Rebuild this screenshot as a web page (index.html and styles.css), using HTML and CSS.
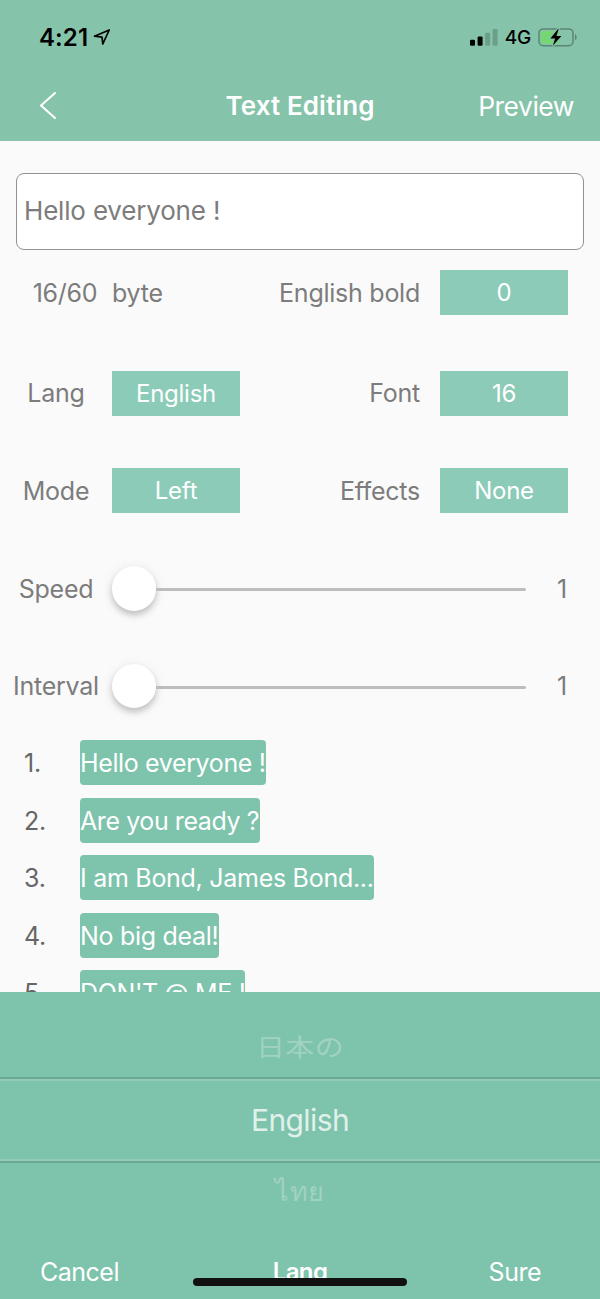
FILE: index.html
```html
<!DOCTYPE html>
<html lang="en">
<head>
<meta charset="utf-8">
<title>Text Editing</title>
<link rel="stylesheet" href="styles.css">
</head>
<body>
<div class="screen">
  <header class="header">
    <div class="status">
      <div class="status-time"><span class="time">4:21</span>
        <svg class="loc" width="18" height="18" viewBox="0 0 18 18"><path d="M1.5 7.2 L16.2 1 L9.8 15 L9 8.2 Z" fill="none" stroke="#000" stroke-width="1.7" stroke-linejoin="round"/></svg>
      </div>
      <div class="status-icons">
        <svg width="28" height="18" viewBox="0 0 28 18"><rect x="0" y="10.7" width="5" height="6" rx="1.2"/><rect x="7.6" y="7.5" width="5" height="9.2" rx="1.2"/><rect x="15.1" y="3.7" width="5" height="13" rx="1.2" fill="#6c9f89"/><rect x="22.6" y="0" width="5" height="16.7" rx="1.2" fill="#6c9f89"/></svg>
        <span class="net">4G</span>
        <svg width="40" height="20" viewBox="0 0 40 20"><rect x="1" y="0.9" width="34" height="16.8" rx="4.2" fill="none" stroke="#5b8675" stroke-width="1.5"/><path d="M37 5.8 Q40.4 9.2 37 12.6 Z" fill="#5b8675"/><rect x="3" y="2.9" width="18.5" height="12.8" rx="2.2" fill="#76d672"/><path d="M20.2 0.8 L12.4 10.4 H17.1 L14.8 17.8 L23.4 8 H18.5 L20.7 0.8 Z" fill="#000" stroke="#85c3aa" stroke-width="2.2" paint-order="stroke"/></svg>
      </div>
    </div>
    <div class="nav">
      <svg class="back" width="20" height="30" viewBox="0 0 20 30"><path d="M17 2 L3 14.5 L17 27" fill="none" stroke="#fff" stroke-width="2.1" stroke-linecap="round" stroke-linejoin="round"/></svg>
      <h1 class="title">Text Editing</h1>
      <span class="preview">Preview</span>
    </div>
  </header>
  <main class="main">
    <div class="input">Hello everyone !</div>
    <div class="row row-count">
      <span class="label count">16/60</span><span class="byte">byte</span>
      <span class="label-right">English bold</span><span class="button">0</span>
    </div>
    <div class="row row-lang">
      <span class="label">Lang</span><span class="button">English</span>
      <span class="label-right">Font</span><span class="button">16</span>
    </div>
    <div class="row row-mode">
      <span class="label">Mode</span><span class="button">Left</span>
      <span class="label-right">Effects</span><span class="button">None</span>
    </div>
    <div class="row row-slider">
      <span class="label">Speed</span><span class="slider"><i class="knob"></i><i class="track"></i></span><span class="value">1</span>
    </div>
    <div class="row row-slider">
      <span class="label">Interval</span><span class="slider"><i class="knob"></i><i class="track"></i></span><span class="value">1</span>
    </div>
    <div class="list">
      <div class="item"><span class="num">1.</span><span class="chip w1">Hello everyone !</span></div>
      <div class="item"><span class="num">2.</span><span class="chip w2">Are you ready ?</span></div>
      <div class="item"><span class="num">3.</span><span class="chip w3">I am Bond, James Bond...</span></div>
      <div class="item"><span class="num">4.</span><span class="chip w4">No big deal!</span></div>
      <div class="item"><span class="num">5.</span><span class="chip w5">DON'T @ ME !</span></div>
    </div>
  </main>
  <section class="picker">
    <div class="option option-prev" lang="ja"><span class="tilt">日本の</span></div>
    <div class="option option-current">English</div>
    <div class="option option-next" lang="th">ไทย</div>
    <footer class="actions"><span class="cancel">Cancel</span><strong class="picker-title">Lang</strong><span class="sure">Sure</span></footer>
    <div class="home"></div>
  </section>
</div>
</body>
</html>
```
FILE: styles.css
```css
* { box-sizing: border-box; }
body { margin: 0; font-family: Inter, "Noto Sans CJK JP", "Noto Sans", sans-serif; }
.screen { width: 600px; height: 1299px; display: flex; flex-direction: column; overflow: hidden; background: #fafafa; color: #7c7c7c; font-size: 25px; line-height: 30px; letter-spacing: -0.25px; white-space: nowrap; }
svg { display: block; flex: none; }

.header { flex: none; height: 141px; background: #85c3aa; color: #fff; }
.status { height: 71px; padding: 4px 22px 0 39px; display: flex; align-items: center; justify-content: space-between; color: #000; }
.status-time { display: flex; align-items: center; gap: 5px; }
.time { font-size: 24px; font-weight: 600; letter-spacing: 0.1px; }
.status-icons { display: flex; align-items: center; gap: 7px; }
.net { font-size: 19px; font-weight: 500; letter-spacing: -0.2px; }
.nav { height: 70px; padding: 0 26px 0 38px; display: grid; grid-template-columns: 104px 1fr 116px; align-items: center; }
.title { margin: 0; font-size: 26px; font-weight: 600; text-align: center; letter-spacing: 0.1px; }
.preview { font-size: 26.5px; text-align: right; letter-spacing: -0.5px; }

.main { flex: none; height: 851px; overflow: hidden; padding-top: 32px; }
.input { height: 77px; margin: 0 16px; padding: 0 7px; border: 1px solid #929292; border-radius: 8px; background: #fff; font-size: 26px; line-height: 73px; letter-spacing: -0.18px; }
.row { display: flex; align-items: center; height: 45px; }
.row-count { margin-top: 20px; }
.row-lang { margin-top: 56px; }
.row-mode { margin-top: 52px; }
.row-slider { margin-top: 53px; }
.row-slider + .row-slider { margin-top: 52.6px; }
.label { width: 112px; text-align: center; }
.count { padding-left: 18px; }
.byte { width: 128px; }
.label-right { width: 180px; text-align: right; }
.row-lang .label, .row-lang .label-right { padding-bottom: 2px; }
.button { width: 128px; height: 45px; background: #8bcbb8; color: #fff; text-align: center; font-size: 24px; line-height: 45px; }
.label-right + .button { margin-left: 20px; }
.slider { width: 414px; height: 45px; display: flex; align-items: center; }
.knob { width: 44.5px; height: 44.5px; flex: none; margin-left: -0.5px; border-radius: 50%; background: #fff; box-shadow: 0 4px 6px rgba(0,0,0,.2), 0 2px 14px rgba(0,0,0,.07); }
.track { flex: 1; height: 3px; margin-top: 2px; border-radius: 0 2px 2px 0; background: #bdbdbd; }
.value { width: 41px; text-align: right; }

.list { margin-top: 31.4px; color: #666; }
.item { display: flex; align-items: center; height: 45px; margin-bottom: 12.6px; }
.num { width: 80px; padding: 1px 0 0 24px; line-height: 32px; }
.chip { height: 45px; border-radius: 4px; background: #7ec3ab; color: #fff; line-height: 46px; }
.w1 { width: 186px; letter-spacing: -0.37px; }
.w2 { width: 180px; letter-spacing: -0.42px; }
.w3 { width: 294px; letter-spacing: -0.28px; }
.w4 { width: 139px; letter-spacing: -0.3px; }
.w5 { width: 165px; letter-spacing: -0.35px; }

.picker { position: relative; flex: none; height: 307px; background: #7ec3ab; color: #fff; }
.option { text-align: center; }
.option-prev { height: 85px; padding-top: 26px; font-size: 29px; line-height: 60px; color: #a1d2c2; letter-spacing: 0.4px; }
.tilt { display: inline-block; transform: scaleY(.84); }
.option-current { height: 86px; border-top: 2px solid #6da895; border-bottom: 2px solid #6da895; box-shadow: inset 0 2px #90cbb8, inset 0 -2px #90cbb8; font-size: 30px; line-height: 82px; color: #e0f1eb; letter-spacing: -0.6px; }
.option-next { height: 84px; font-size: 27px; line-height: 58px; color: #a1d2c2; font-weight: 500; letter-spacing: 0.4px; }
.actions { padding: 10px 59px 0 40px; display: grid; grid-template-columns: 160px 1fr 141px; letter-spacing: -0.5px; }
.picker-title { text-align: center; font-size: 24px; font-weight: 600; letter-spacing: -0.6px; }
.sure { text-align: right; }
.home { position: absolute; left: 193px; bottom: 13px; width: 214px; height: 8px; border-radius: 4px; background: #111; }
```
